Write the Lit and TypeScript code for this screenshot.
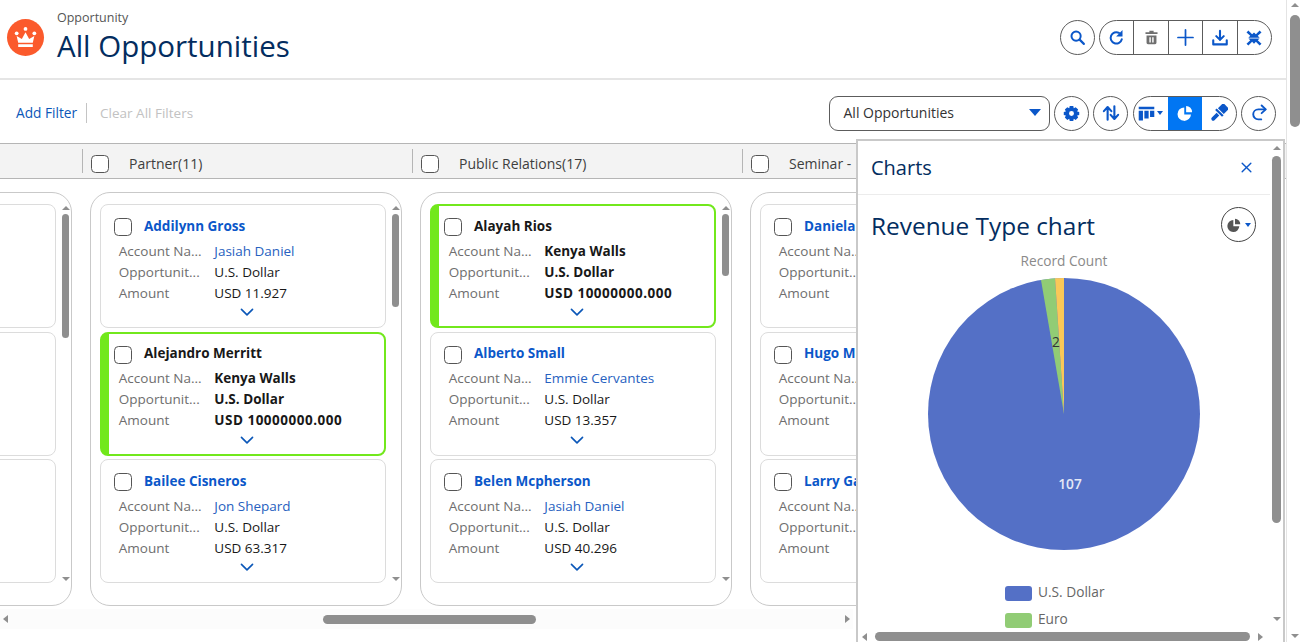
import { LitElement, html, css, svg } from "lit";
import { customElement } from "lit/decorators.js";

const S = (size: number, inner: unknown, cls = "") => html`<svg class=${cls} width=${size} height=${size} viewBox="0 0 24 24">${inner}</svg>`;
const I = {
  search: svg`<circle cx="10" cy="10" r="6.5" fill="none" stroke="currentColor" stroke-width="2.8"/><path d="M15 15l6 6" stroke="currentColor" stroke-width="3" stroke-linecap="round"/>`,
  refresh: svg`<path d="M19.500 14.500A8 8 0 1 1 15.500 5.500" fill="none" stroke="currentColor" stroke-width="2.800" stroke-linecap="round"/><path d="M20.500 1.500v9h-9z" fill="currentColor"/>`,
  trash: svg`<path d="M9 2.500h6v2h5.500v2.500h-17v-2.500h5.500zM5 9h14v10.500a2 2 0 0 1-2 2H7a2 2 0 0 1-2-2zM9 11.500V19h2v-7.500zM13 11.500V19h2v-7.500z" fill="currentColor" fill-rule="evenodd"/>`,
  plus: svg`<path d="M12 2.500v19M2.500 12h19" stroke="currentColor" stroke-width="2.200" stroke-linecap="round"/>`,
  download: svg`<path d="M12 2.500v12M7 9.500l5 5 5-5" fill="none" stroke="currentColor" stroke-width="2.800" stroke-linecap="round" stroke-linejoin="round"/><path d="M3 15v5.500h18V15" fill="none" stroke="currentColor" stroke-width="2.800" stroke-linecap="round" stroke-linejoin="round"/>`,
  collapse: svg`<path d="M2 4.500L4.500 2l5 5L12 4.500v7H4.500l2.500-2.500zM22 4.500L19.500 2l-5 5L12 4.500v7h7.500l-2.500-2.500zM2 19.500L4.500 22l5-5 2.500 2.500v-7H4.500l2.500 2.500zM22 19.500L19.500 22l-5-5L12 19.500v-7h7.500l-2.500 2.500z" fill="currentColor"/>`,
  gear: svg`<path fill-rule="evenodd" fill="currentColor" d="M9.500 1.500h5l.7 3 2.700-1.500 3.500 3.500-1.500 2.700 3 .8v4l-3 .8 1.500 2.700-3.500 3.500-2.700-1.500-.7 3h-5l-.7-3L6.100 21 2.600 17.500l1.500-2.700-3-.8v-4l3-.8L2.600 6.500 6.100 3l2.700 1.500zM12 8.500a3.500 3.500 0 1 0 0 7 3.500 3.500 0 0 0 0-7z"/>`,
  sort: svg`<path d="M7.500 21V4.500M2.500 9.500L7.500 4l5 5.500M16.500 3v16.500M11.500 14.500l5 5.500 5-5.500" fill="none" stroke="currentColor" stroke-width="2.800" stroke-linecap="round" stroke-linejoin="round"/>`,
  columns: svg`<path d="M1 2.500h22v3.500H1zM1 8h6v14H2a1 1 0 0 1-1-1zM9 8h6v11H9zM17 8h6v9h-6z" fill="currentColor"/>`,
  pie: svg`<path d="M11 4.500A9 9 0 1 0 20 14h-9z" fill="currentColor"/><path d="M13.500 2.500a8.500 8.500 0 0 1 8 8.500h-8z" fill="currentColor"/>`,
  brush: svg`<g transform="rotate(45 12 12)"><path d="M6.500 -1.500h11v10h-11z" fill="currentColor"/><path d="M5.500 9.800h13v3h-13z" fill="currentColor"/><path d="M9.500 14h5v9a2.500 2.500 0 0 1-5 0z" fill="currentColor"/></g>`,
  forward: svg`<path d="M15 20.500h-4a6.700 6.700 0 0 1 0-13.400h9.500" fill="none" stroke="currentColor" stroke-width="2.500" stroke-linecap="round"/><path d="M15.500 2l5.500 5.100-5.500 5.100" fill="none" stroke="currentColor" stroke-width="2.500" stroke-linecap="round" stroke-linejoin="round"/>`,
  close: svg`<path d="M4 4l16 16M20 4L4 20" stroke="currentColor" stroke-width="2.600" stroke-linecap="round"/>`,
  chevron: svg`<path d="M2.500 7.500L12 17l9.500-9.500" fill="none" stroke="currentColor" stroke-width="2.800" stroke-linecap="round" stroke-linejoin="round"/>`,
  crown: svg`<circle cx="3.500" cy="8" r="1.800" fill="#fff"/><circle cx="12" cy="3.800" r="1.800" fill="#fff"/><circle cx="20.500" cy="8" r="1.800" fill="#fff"/><path d="M3.500 10.500l5 3L12 7l3.500 6.500 5-3L19 17H5zM5 18.500h14V21H5z" fill="#fff"/>`,
};

const tri = (d: "u" | "d" | "l" | "r") => html`<i class="tri ${d}"></i>`;

interface Card { name: string; acct?: string; type?: string; amt?: string; hi?: boolean; }
const cols: { title: string; thumb: number; cards: Card[] }[] = [
  { title: "", thumb: 124, cards: [{ name: "" }, { name: "" }, { name: "" }] },
  { title: "Partner(11)", thumb: 93, cards: [
    { name: "Addilynn Gross", acct: "Jasiah Daniel", type: "U.S. Dollar", amt: "USD 11.927" },
    { name: "Alejandro Merritt", acct: "Kenya Walls", type: "U.S. Dollar", amt: "USD 10000000.000", hi: true },
    { name: "Bailee Cisneros", acct: "Jon Shepard", type: "U.S. Dollar", amt: "USD 63.317" },
  ] },
  { title: "Public Relations(17)", thumb: 62, cards: [
    { name: "Alayah Rios", acct: "Kenya Walls", type: "U.S. Dollar", amt: "USD 10000000.000", hi: true },
    { name: "Alberto Small", acct: "Emmie Cervantes", type: "U.S. Dollar", amt: "USD 13.357" },
    { name: "Belen Mcpherson", acct: "Jasiah Daniel", type: "U.S. Dollar", amt: "USD 40.296" },
  ] },
  { title: "Seminar -", thumb: 60, cards: [
    { name: "Daniela", acct: "", type: "", amt: "" },
    { name: "Hugo M", acct: "", type: "", amt: "" },
    { name: "Larry Ga", acct: "", type: "", amt: "" },
  ] },
];

@customElement("app-root")
export class AppRoot extends LitElement {
  static styles = css`
    :host { display: flex; width: 1300px; height: 642px; overflow: hidden; background: #fff; font-family: "Open Sans", "Noto Sans", sans-serif; font-size: 13.500px; color: #181818; }
    * { box-sizing: border-box; }
    svg { display: block; flex: none; }
    .main { width: 1286px; position: relative; display: flex; flex-direction: column; height: 642px; }
    .pagebar { width: 14px; position: relative; border-left: 1px solid #e4e4e4; display: flex; flex-direction: column; align-items: center; padding: 3px 0 0 2px; }
    .pagebar .thumb { width: 10px; height: 112px; border-radius: 5px; background: #8f8f8f; margin-top: 8px; }
    .pagebar .spacer { flex: 1; }
    .pagebar .tri.d { margin-bottom: 4px; }
    .tri { display: block; width: 0; height: 0; border-style: solid; border-color: transparent; flex: none; }
    .tri.u { border-width: 0 4px 4px; border-bottom-color: #8f8f8f; }
    .tri.d { border-width: 4px 4px 0; border-top-color: #8f8f8f; }
    .tri.l { border-width: 4px 5px 4px 0; border-right-color: #8f8f8f; }
    .tri.r { border-width: 4px 0 4px 5px; border-left-color: #8f8f8f; }

    .top { height: 80px; flex: none; border-bottom: 2px solid #e5e5e5; display: flex; align-items: flex-start; padding: 0 14px 0 7px; }
    .logo { width: 37px; height: 37px; border-radius: 50%; background: #fb5a2c; margin-top: 19px; display: flex; align-items: center; justify-content: center; }
    .titles { margin-left: 13px; padding-top: 10px; flex: 1; }
    .eyebrow { font-size: 12.500px; line-height: 16px; color: #555; }
    h1 { margin: 0; font-weight: 400; font-size: 29.500px; line-height: 40px; color: #032d60; }
    .tools { display: flex; gap: 4px; margin-top: 20px; }

    .round, .group { height: 35px; border: 1px solid #5c5c5c; border-radius: 18px; display: flex; background: #fff; color: #0b57c9; }
    .round { width: 35px; align-items: center; justify-content: center; }
    .group { overflow: hidden; }
    .group > div { flex: 1; display: flex; align-items: center; justify-content: center; border-left: 1px solid #5c5c5c; }
    .group > div:first-child { border-left: none; }
    .group > .muted { color: #6f6f6f; }
    .group > .on { background: #0176f3; color: #fff; border-left: none; }
    .group > .plain { border-left: none; }
    .w5 { width: 173px; }
    .w3 { width: 104px; }
    .caret { width: 0; height: 0; border: 3.500px solid transparent; border-top: 4px solid currentColor; border-bottom: 0; margin-left: 2px; }
    .caret.gap { margin-left: 3px; }

    .filters { height: 63px; flex: none; display: flex; align-items: center; padding: 3px 10px 0 16px; }
    .add { color: #0b57b8; font-size: 13.700px; padding-bottom: 1px; }
    .sep { width: 1px; height: 20px; background: #c4c4c4; margin: 0 13px 0 9px; }
    .clear { color: #c2c2c2; font-size: 13.500px; flex: 1; padding-bottom: 1px; }
    .select { width: 221px; height: 35px; border: 1px solid #5c5c5c; border-radius: 9px; display: flex; align-items: center; justify-content: space-between; padding: 0 8px 1px 14px; color: #333; font-size: 14px; margin-right: 4px; }
    .select i { width: 0; height: 0; border: 6.500px solid transparent; border-top: 7px solid #0b57c9; border-bottom: 0; }
    .right { display: flex; gap: 4.500px; }

    .heads { height: 36px; flex: none; border-top: 1px solid #b5b5b5; border-bottom: 1px solid #b5b5b5; background: #f3f3f3; overflow: hidden; display: flex; align-items: center; }
    .heads-in { display: flex; margin-left: -248px; flex: none; }
    .hcell { width: 330px; flex: none; height: 24px; border-left: 1px solid #b5b5b5; padding-left: 8px; display: flex; align-items: flex-end; font-size: 14px; line-height: 19px; color: #3e3e3e; white-space: nowrap; }
    .hcell .cb { margin-right: 20px; }
    .cb { width: 18px; height: 18px; border: 1px solid #555; border-radius: 4.500px; background: #fff; flex: none; }

    .board { flex: 1; overflow: hidden; padding-top: 13px; }
    .board-in { display: flex; gap: 18px; margin-left: -240px; }
    .col { width: 312px; flex: none; height: 414px; border: 1px solid #c9c9c9; border-radius: 20px; padding: 11px 15px 0 9px; position: relative; display: flex; flex-direction: column; gap: 3.500px; }
    .card { height: 124px; flex: none; border: 1px solid #dcdcdc; border-radius: 8px; padding: 11.500px 0 0 13px; position: relative; background: #fff; }
    .card.hi { border: 2px solid #72e81c; border-left-width: 9px; padding: 10.500px 0 0 5px; }
    .nm { display: flex; align-items: center; gap: 12px; height: 18px; font-weight: 700; color: #0b57c9; white-space: nowrap; }
    .nm .cb { margin-top: 3px; }
    .card.hi .nm { color: #181818; }
    .rows { margin: 5.700px 0 0 4.800px; display: grid; grid-template-columns: 95.500px 1fr; grid-auto-rows: 21px; align-items: center; white-space: nowrap; }
    .lb { color: #6e6e6e; }
    .lk { color: #2761c0; }
    .card.hi .vl { font-weight: 700; color: #181818; }
    .card.hi .am { letter-spacing: .5px; }
    .chev { position: absolute; left: 139px; top: 100px; color: #0b57b8; }
    .card.hi .chev { left: 131px; top: 99px; }
    .vbar { position: absolute; right: 1px; top: 13px; bottom: 24px; width: 9px; display: flex; flex-direction: column; align-items: center; }
    .vbar .thumb { width: 7px; border-radius: 4px; background: #8f8f8f; margin-top: 4px; }
    .vbar .spacer { flex: 1; }

    .hbar { height: 20px; width: 853px; flex: none; margin-bottom: 13px; display: flex; align-items: center; padding: 0 3px; background: #fcfcfc; }
    .hbar .thumb { width: 213px; height: 9px; border-radius: 5px; background: #8f8f8f; margin-left: 315px; }
    .hbar .spacer { flex: 1; }

    .panel { position: absolute; left: 856px; top: 139px; width: 429px; height: 503px; background: #fff; border: 2px solid #c9c9c9; border-bottom: 0; display: flex; flex-direction: column; }
    .p-wrap { flex: 1; display: flex; min-height: 0; }
    .p-body { width: 412px; flex: none; display: flex; flex-direction: column; overflow: hidden; }
    .p-head { height: 54px; flex: none; border-bottom: 1px solid #ececec; display: flex; align-items: center; justify-content: space-between; padding: 0 17px 0 13px; }
    .p-head span { font-size: 20px; color: #032d60; }
    .p-head div { color: #0b57c9; }
    .c-title { height: 55px; flex: none; display: flex; align-items: center; justify-content: space-between; padding: 4px 14px 0 13px; }
    .c-title span { font-size: 24.400px; color: #032d60; line-height: 32px; padding-top: 3px; }
    .c-btn { width: 35px; height: 35px; border: 1px solid #444; border-radius: 50%; display: flex; align-items: center; justify-content: center; color: #0b57c9; }
    .c-btn svg { color: #555; }
    .chart text { font-family: "Open Sans", "Noto Sans", sans-serif; font-size: 13.700px; }
    .chart .strong { font-weight: 600; }
    .p-vbar { width: 13px; flex: none; display: flex; flex-direction: column; align-items: center; padding-top: 5px; height: 480px; }
    .p-vbar .thumb { width: 9px; height: 367px; border-radius: 5px; background: #8f8f8f; margin-top: 6px; }
    .p-vbar .spacer { flex: 1; }
    .p-hbar { height: 11px; flex: none; display: flex; align-items: center; padding: 0 0 0 4px; }
    .p-hbar .thumb { width: 375px; height: 9px; border-radius: 5px; background: #8f8f8f; margin: 0 8px; }
  `;

  private card(c: Card) {
    return html`<div class="card ${c.hi ? "hi" : ""}">
      ${c.name ? html`<div class="nm"><div class="cb"></div>${c.name}</div>
      <div class="rows">
        <span class="lb">Account Na...</span><span class="vl lk">${c.acct}</span>
        <span class="lb">Opportunit...</span><span class="vl">${c.type}</span>
        <span class="lb">Amount</span><span class="vl am">${c.amt}</span>
      </div>
      ${S(14, I.chevron, "chev")}` : ""}
    </div>`;
  }

  render() {
    return html`
      <div class="main">
        <div class="top">
          <div class="logo">${S(25, I.crown)}</div>
          <div class="titles">
            <div class="eyebrow">Opportunity</div>
            <h1>All Opportunities</h1>
          </div>
          <div class="tools">
            <div class="round">${S(17, I.search)}</div>
            <div class="group w5">
              <div>${S(17, I.refresh)}</div>
              <div class="muted">${S(17, I.trash)}</div>
              <div>${S(19, I.plus)}</div>
              <div>${S(18, I.download)}</div>
              <div>${S(18, I.collapse)}</div>
            </div>
          </div>
        </div>
        <div class="filters">
          <span class="add">Add Filter</span><div class="sep"></div><span class="clear">Clear All Filters</span>
          <div class="select"><span>All Opportunities</span><i></i></div>
          <div class="right">
            <div class="round">${S(17, I.gear)}</div>
            <div class="round">${S(18, I.sort)}</div>
            <div class="group w3">
              <div>${S(17, I.columns)}<b class="caret"></b></div>
              <div class="on">${S(18, I.pie)}</div>
              <div class="plain">${S(18, I.brush)}</div>
            </div>
            <div class="round">${S(18, I.forward)}</div>
          </div>
        </div>
        <div class="heads"><div class="heads-in">
          ${cols.map((c) => html`<div class="hcell">${c.title ? html`<div class="cb"></div>${c.title}` : ""}</div>`)}
        </div></div>
        <div class="board"><div class="board-in">
          ${cols.map((c) => html`<div class="col">
            ${c.cards.map((k) => this.card(k))}
            <div class="vbar">${tri("u")}<div class="thumb" style="height:${c.thumb}px"></div><div class="spacer"></div>${tri("d")}</div>
          </div>`)}
        </div></div>
        <div class="hbar">${tri("l")}<div class="thumb"></div><div class="spacer"></div>${tri("r")}</div>

        <div class="panel">
          <div class="p-wrap">
            <div class="p-body">
              <div class="p-head"><span>Charts</span><div>${S(13, I.close)}</div></div>
              <div class="c-title"><span>Revenue Type chart</span>
                <div class="c-btn">${S(16, I.pie)}<b class="caret gap"></b></div>
              </div>
              <svg class="chart" width="412" height="381" viewBox="0 0 412 381">
                <text x="206" y="16" text-anchor="middle" fill="#8a8a8a">Record Count</text>
                <circle cx="206" cy="164" r="136" fill="#5470c6"/>
                <path d="M206 164L183 30A136 136 0 0 1 197 28.300Z" fill="#91cc75"/>
                <path d="M206 164L197 28.300A136 136 0 0 1 206 28Z" fill="#fac858"/>
                <text class="strong" x="212" y="239" text-anchor="middle" fill="#e4e8f6">107</text>
                <text x="198" y="97" text-anchor="middle" fill="#333">2</text>
                <rect x="147" y="336" width="27" height="15" rx="3" fill="#5470c6"/>
                <text x="180" y="347" fill="#666">U.S. Dollar</text>
                <rect x="147" y="363" width="27" height="15" rx="3" fill="#91cc75"/>
                <text x="180" y="374" fill="#666">Euro</text>
              </svg>
            </div>
            <div class="p-vbar">${tri("u")}<div class="thumb"></div><div class="spacer"></div>${tri("d")}</div>
          </div>
          <div class="p-hbar">${tri("l")}<div class="thumb"></div>${tri("r")}</div>
        </div>
      </div>
      <div class="pagebar">${tri("u")}<div class="thumb"></div><div class="spacer"></div>${tri("d")}</div>
    `;
  }
}
